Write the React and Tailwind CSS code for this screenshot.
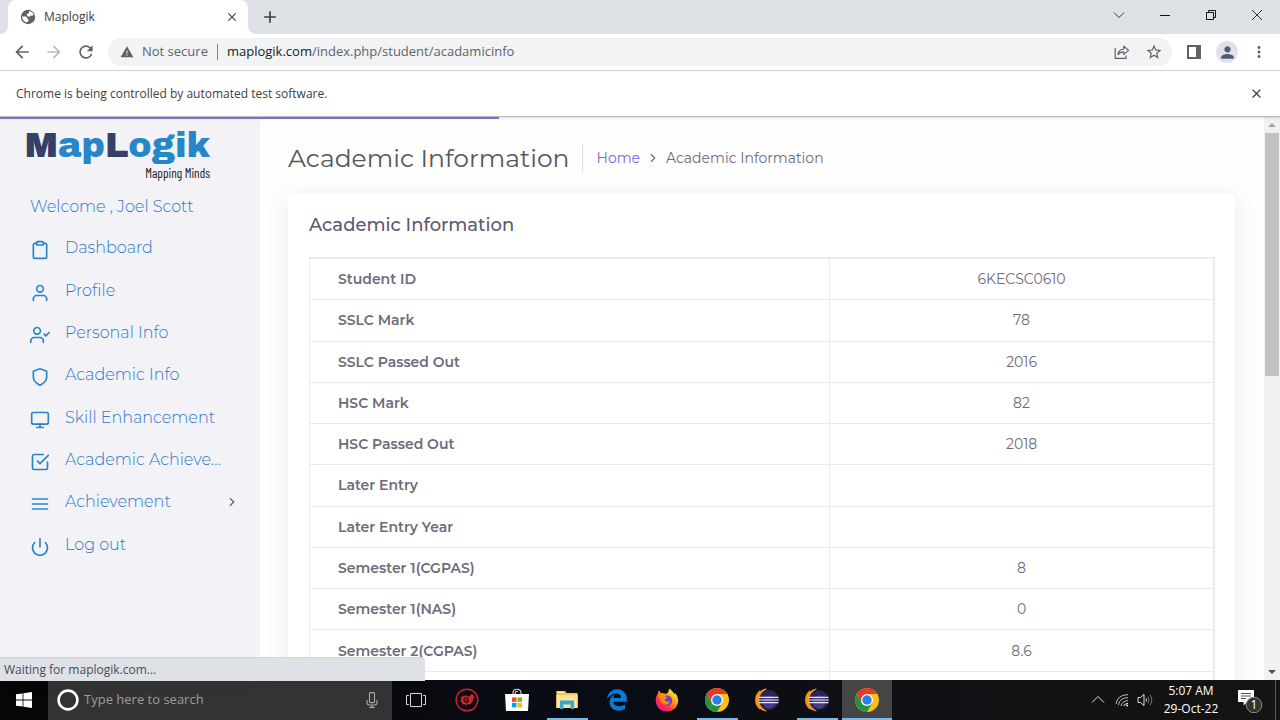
import React from "react";
import {
  FiClipboard,
  FiUser,
  FiUserCheck,
  FiShield,
  FiMonitor,
  FiCheckSquare,
  FiMenu,
  FiPower,
  FiChevronRight,
} from "react-icons/fi";
import {
  MdArrowBack,
  MdArrowForward,
  MdRefresh,
  MdWarning,
  MdStarBorder,
  MdMoreVert,
  MdPerson,
  MdClose,
  MdAdd,
} from "react-icons/md";
import { FaEdgeLegacy } from "react-icons/fa";

const navItems = [
  { label: "Dashboard", Icon: FiClipboard },
  { label: "Profile", Icon: FiUser },
  { label: "Personal Info", Icon: FiUserCheck },
  { label: "Academic Info", Icon: FiShield },
  { label: "Skill Enhancement", Icon: FiMonitor },
  { label: "Academic Achieve...", Icon: FiCheckSquare },
  { label: "Achievement", Icon: FiMenu, expandable: true },
  { label: "Log out", Icon: FiPower },
];

const records = [
  ["Student ID", "6KECSC0610"],
  ["SSLC Mark", "78"],
  ["SSLC Passed Out", "2016"],
  ["HSC Mark", "82"],
  ["HSC Passed Out", "2018"],
  ["Later Entry", ""],
  ["Later Entry Year", ""],
  ["Semester 1(CGPAS)", "8"],
  ["Semester 1(NAS)", "0"],
  ["Semester 2(CGPAS)", "8.6"],
];

function Globe() {
  return (
    <svg viewBox="0 0 16 16" className="size-4 shrink-0" aria-hidden="true">
      <circle cx="8" cy="8" r="7.2" fill="#5f6368" />
      <path
        d="M2.2 7.4 L6 7.6 7.6 9 7.4 10.2 8.8 10.8 8 12.4 6.6 13.6 Q3 12.4 2.2 9Z M9 2 Q12.6 2.6 13.6 5.8 L12.4 6.8 10 6.8 9.4 8 7.6 7 6.6 5.6 7.6 4.6 9 4.4Z"
        fill="#fff"
      />
    </svg>
  );
}

function TabStrip() {
  return (
    <header className="flex h-[34px] shrink-0 items-stretch bg-[#dee1e6]">
      <div className="flex w-2 bg-white">
        <span className="flex-1 rounded-br-lg bg-[#dee1e6]" />
      </div>
      <div className="flex w-60 items-center rounded-t-lg bg-white pr-2 pl-3">
        <Globe />
        <span className="ml-2 flex-1 text-xs text-[#3c4043]">Maplogik</span>
        <button aria-label="Close tab" className="grid size-4 place-items-center text-[#3c4043]">
          <MdClose size={14} />
        </button>
      </div>
      <div className="flex w-2 bg-white">
        <span className="flex-1 rounded-bl-lg bg-[#dee1e6]" />
      </div>
      <button aria-label="New tab" className="ml-1 grid w-5 place-items-center text-[#3c4043]">
        <MdAdd size={20} />
      </button>
      <div className="ml-auto flex text-[#333]">
        <button aria-label="Search tabs" className="grid w-[46px] place-items-center pb-1">
          <svg viewBox="0 0 12 12" className="size-3" fill="none" stroke="currentColor">
            <path d="M1 3.5 L6 8.5 11 3.5" />
          </svg>
        </button>
        <button aria-label="Minimize" className="grid w-[46px] place-items-center pb-1">
          <svg viewBox="0 0 12 12" className="size-3" fill="none" stroke="#111">
            <path d="M1 6.5 H11" />
          </svg>
        </button>
        <button aria-label="Restore" className="grid w-[46px] place-items-center pb-1">
          <svg viewBox="0 0 12 12" className="size-3" fill="none" stroke="#111">
            <path d="M1.5 3.5 H8.5 V10.5 H1.5Z M3.5 3.5 V1.5 H10.5 V8.5 H8.5" />
          </svg>
        </button>
        <button aria-label="Close" className="grid w-[46px] place-items-center pb-1">
          <svg viewBox="0 0 12 12" className="size-3" fill="none" stroke="currentColor">
            <path d="M1 1 L11 11 M11 1 L1 11" />
          </svg>
        </button>
      </div>
    </header>
  );
}

function Toolbar() {
  return (
    <div className="flex h-[37px] shrink-0 items-center border-b border-[#d5d6d8] bg-white pr-3 pl-3 text-[#5f6368]">
      <button aria-label="Back" className="grid size-5 place-items-center text-[#5f6368]">
        <MdArrowBack size={20} />
      </button>
      <button aria-label="Forward" className="ml-3 grid size-5 place-items-center text-[#babcbe]">
        <MdArrowForward size={20} />
      </button>
      <button aria-label="Reload" className="ml-3 grid size-5 place-items-center text-[#5f6368]">
        <MdRefresh size={20} />
      </button>
      <div className="ml-3 flex h-7 flex-1 items-center rounded-full bg-[#f1f3f4] pr-2 pl-3">
        <MdWarning size={14} />
        <span className="ml-2 text-[13px]">Not secure</span>
        <span className="mx-[9px] h-4 w-px bg-[#80868b]" />
        <span className="flex-1 text-[13px]">
          <span className="text-[#202124]">maplogik.com</span>/index.php/student/acadamicinfo
        </span>
        <button aria-label="Share" className="grid size-5 place-items-center">
          <svg viewBox="0 0 16 16" className="size-4" fill="none" stroke="currentColor" strokeWidth="1.2">
            <path d="M1.2 4 V14.4 H12 V11.5" />
            <path d="M4 10.6 Q4.6 5.4 9.8 5 V2.2 L14.6 6.4 9.8 10.4 V7.8 Q6 7.8 4 10.6Z" strokeLinejoin="round" />
          </svg>
        </button>
        <button aria-label="Bookmark" className="ml-3 grid size-5 place-items-center">
          <MdStarBorder size={18} />
        </button>
      </div>
      <button aria-label="Side panel" className="ml-3 grid size-5 place-items-center">
        <svg viewBox="0 0 14 14" className="size-[14px]">
          <path d="M0 0 H14 V14 H0Z M2 2 V12 H9 V2Z" fill="#5f6368" fillRule="evenodd" />
        </svg>
      </button>
      <button
        aria-label="Account"
        className="ml-3 grid size-[22px] place-items-center rounded-full bg-[#dfe2e8] text-[#4d5b76]"
      >
        <MdPerson size={19} />
      </button>
      <button aria-label="More" className="ml-3 grid w-[18px] place-items-center">
        <MdMoreVert size={18} />
      </button>
    </div>
  );
}

function Sidebar() {
  return (
    <aside className="w-65 shrink-0 bg-[#f2f2f7] font-['Montserrat','Inter',sans-serif] text-base font-light text-[#2f78c4] shadow-[0_0_15px_0_rgba(34,41,47,0.06)]">
      <div className="flex w-[210px] flex-col items-end pt-2">
        <div className="font-['Arial_Black','Archivo_Black','Inter',sans-serif] text-[35px] leading-10 font-normal text-[#2786c8]">
          <span className="text-[#354069]">M</span>ap<span className="text-[#354069]">L</span>ogik
        </div>
        <div className="font-['Bahnschrift_Condensed','Barlow_Condensed','Roboto_Condensed',sans-serif] text-[13px] leading-4 font-normal text-[#1a1a1a]">
          Mapping Minds
        </div>
      </div>
      <p className="mt-3.5 pl-[30px] leading-6">Welcome , Joel Scott</p>
      <nav className="mt-2">
        <ul className="grid h-[339px] grid-rows-8">
          {navItems.map(({ label, Icon, expandable }) => (
            <li key={label} className="flex">
              <a href="#" className="flex flex-1 items-center pr-[21px] pl-[30px]">
                <Icon size={20} className="mt-1 shrink-0 text-[#2786c8]" />
                <span className="ml-[15px] flex-1 whitespace-nowrap">{label}</span>
                {expandable && <FiChevronRight size={14} className="text-[#625f6e]" />}
              </a>
            </li>
          ))}
        </ul>
      </nav>
    </aside>
  );
}

function Main() {
  return (
    <main className="min-w-0 flex-1 overflow-hidden bg-[#fefefe] pt-[27px] pr-[29px] pl-7 font-['Montserrat','Inter',sans-serif] text-[#6e6b7b]">
      <div className="flex h-7 items-center">
        <h2 className="border-r border-[#d6dce1] pr-3 text-[25px] leading-7 text-[#585858]">
          Academic Information
        </h2>
        <nav aria-label="Breadcrumb" className="flex items-center gap-1.5 pl-3.5 text-sm">
          <a href="#" className="text-[#7367f0]">
            Home
          </a>
          <FiChevronRight size={14} />
          <span>Academic Information</span>
        </nav>
      </div>
      <section className="mt-[22px] rounded-md bg-white pt-[17px] pr-5 pl-[21px] shadow-[0_4px_24px_0_rgba(34,41,47,0.1)]">
        <h4 className="text-lg leading-7 font-medium text-[#5e5873]">Academic Information</h4>
        <table className="mt-[18px] block w-full border-t-2 border-r-2 border-l border-[#ebe9f1] text-sm">
          <tbody className="grid h-[454px] auto-rows-fr">
            {records.map(([name, value]) => (
              <tr key={name} className="grid grid-cols-[57.6%_1fr] border-b border-[#ebe9f1]">
                <th scope="row" className="flex items-center border-r border-[#ebe9f1] pl-7 text-left font-semibold">
                  {name}
                </th>
                <td className="flex items-center justify-center">{value}</td>
              </tr>
            ))}
            <tr className="grid grid-cols-[57.6%_1fr]">
              <td className="border-r border-[#ebe9f1]" />
              <td />
            </tr>
          </tbody>
        </table>
      </section>
    </main>
  );
}

function Scrollbar() {
  return (
    <div className="flex w-4 shrink-0 flex-col items-center justify-between bg-[#f1f1f1]">
      <div className="flex flex-col items-center">
        <svg viewBox="0 0 16 16" className="size-4">
          <path d="M4 10 L8 6 12 10Z" fill="#a3a3a3" />
        </svg>
        <div className="h-[243px] w-3.5 bg-[#c1c1c1]" />
      </div>
      <svg viewBox="0 0 16 16" className="size-4">
        <path d="M4 6 L8 10 12 6Z" fill="#505050" />
      </svg>
    </div>
  );
}

function ChromeLogo() {
  return (
    <svg viewBox="0 0 24 24" className="size-6" aria-hidden="true">
      <circle cx="12" cy="12" r="12" fill="#fbc116" />
      <path d="M12 0 A12 12 0 0 0 1.6 6 L6.8 15 12 6 H22.4 A12 12 0 0 0 12 0Z" fill="#e33b2e" />
      <path d="M1.6 6 A12 12 0 0 0 12 24 L17.2 15 H6.8Z" fill="#229342" />
      <circle cx="12" cy="12" r="6" fill="#fff" />
      <circle cx="12" cy="12" r="4.7" fill="#2f7de9" />
    </svg>
  );
}

function EclipseLogo() {
  return (
    <svg viewBox="0 0 24 24" className="size-6" aria-hidden="true">
      <path d="M11.4 .4 A11.7 11.7 0 0 0 11.4 23.6 L11.4 22.4 A11.5 11.5 0 0 1 11.4 1.6Z" fill="#f7941e" />
      <path d="M5 3 A11.6 11.6 0 0 0 5 21 A13 13 0 0 1 5 3Z" fill="#f7941e" stroke="#f7941e" strokeWidth="1.2" />
      <circle cx="14" cy="12" r="10" fill="#2c2255" />
      <circle cx="14" cy="14" r="6.5" fill="#483a86" />
      <path d="M3.6 9.4 H23.4 M3.3 12 H23.8 M3.6 14.6 H23.4" stroke="#e9e6f4" strokeWidth="1.2" />
    </svg>
  );
}

function FirefoxLogo() {
  return (
    <svg viewBox="0 0 24 24" className="size-6" aria-hidden="true">
      <defs>
        <linearGradient id="fox" x1="0.85" y1="0.1" x2="0.2" y2="0.95">
          <stop offset="0" stopColor="#fff044" />
          <stop offset="0.4" stopColor="#ff980e" />
          <stop offset="0.7" stopColor="#ff3647" />
          <stop offset="1" stopColor="#e31587" />
        </linearGradient>
      </defs>
      <path
        d="M14.4 .4 Q18 3.2 19.6 6.2 L20 4.8 Q24.4 9.6 22.8 15.2 Q20.4 23.4 12 23.6 Q2.6 23.2 .8 14.4 Q.2 9 3 5.2 L3.4 2.6 Q5 3.4 5.8 5 Q8 4.8 9.4 5.4 Q11.8 6 12.6 5 Q13.8 3.2 14.4 .4Z"
        fill="url(#fox)"
      />
      <path d="M7.2 11.6 Q8.4 7.4 13 7.6 Q17.6 9 17.2 13.4 Q16 17.8 11.6 17.4 Q7.8 16.4 7.2 11.6Z" fill="#6b42c9" />
      <path d="M3.6 7.2 Q7.6 6.4 10 8.4 L12.4 9 Q11.8 10.6 9.8 11 Q9.4 13 12 13.6 Q14 14 15 13 Q14.2 17 9.8 16.6 Q5.4 15 3.6 7.2Z" fill="#ff8a16" />
    </svg>
  );
}

function StoreLogo() {
  return (
    <svg viewBox="0 0 24 24" className="size-6" aria-hidden="true">
      <path d="M8 7 V4.4 Q8.4 1.2 12 1.2 Q15.6 1.2 16 4.4 V7 M10.2 7 V5 Q10.4 3.2 13 3.2" fill="none" stroke="#ddd" strokeWidth="1.1" />
      <path d="M0 6 H24 L23 23 H1Z" fill="#fff" />
      <path d="M7 9.4 H11.5 V13.9 H7Z" fill="#f25022" />
      <path d="M12.5 9.4 H17 V13.9 H12.5Z" fill="#7fba00" />
      <path d="M7 14.9 H11.5 V19.4 H7Z" fill="#00a4ef" />
      <path d="M12.5 14.9 H17 V19.4 H12.5Z" fill="#ffb900" />
    </svg>
  );
}

function FolderLogo() {
  return (
    <svg viewBox="0 0 24 24" className="size-6" aria-hidden="true">
      <path d="M1.4 3 H10 L11.4 5 H22.6 V20 H1.4Z" fill="#f3c74f" />
      <path d="M1.4 7 H22.6 V20 H1.4Z" fill="#fde495" />
      <path d="M2 4.2 H9" stroke="#fff3c0" />
      <path d="M5 21 V12.6 H19 V21 H15.6 V16.6 H8.4 V21Z" fill="#37a6dd" />
    </svg>
  );
}

function BugLogo() {
  return (
    <svg viewBox="0 0 24 24" className="size-6" aria-hidden="true">
      <circle cx="12" cy="12" r="10.8" fill="none" stroke="#d02328" strokeWidth="1.4" />
      <path
        d="M5 8 L7 9.4 7.8 7.4 9.6 8.2 11 7 12.6 8.2 14.4 8.4 17 5.6 20 10 18.2 10 Q18.4 14.6 14.4 16.6 L12.6 16 11 17.4 9.4 16 7.2 16.4 7 14.4 5 13.4 6.4 11.6Z"
        fill="#d02328"
      />
      <path d="M13.2 10.2 Q9 9.4 9 12.2 Q9.6 14.8 13 13.8 V12.2 H11.4" stroke="#140a10" strokeWidth="1.2" fill="none" />
    </svg>
  );
}

const apps = [
  { name: "Debugger", Logo: BugLogo },
  { name: "Store", Logo: StoreLogo },
  { name: "File Explorer", Logo: FolderLogo, open: true },
  { name: "Edge", Logo: () => <FaEdgeLegacy size={22} color="#0a7ad8" /> },
  { name: "Firefox", Logo: FirefoxLogo },
  { name: "Chrome", Logo: ChromeLogo, open: true },
  { name: "Eclipse", Logo: EclipseLogo },
  { name: "Eclipse workspace", Logo: EclipseLogo, open: true },
  { name: "Chrome window", Logo: ChromeLogo, open: true, active: true },
];

function Taskbar() {
  return (
    <footer className="flex h-10 shrink-0 items-stretch bg-linear-to-r from-[#060606] via-[#090c14] via-45% to-[#151413] text-white">
      <button aria-label="Start" className="grid w-12 place-items-center">
        <svg viewBox="0 0 16 16" className="size-4" fill="#fff">
          <path d="M0 2.3 L6.6 1.4 V7.6 H0Z M7.4 1.2 L16 0 V7.6 H7.4Z M0 8.4 H6.6 V14.6 L0 13.7Z M7.4 8.4 H16 V16 L7.4 14.8Z" />
        </svg>
      </button>
      <label className="flex w-[344px] items-center bg-[#333] pr-3 pl-2">
        <svg viewBox="0 0 24 24" className="size-6 shrink-0">
          <circle cx="12" cy="12" r="9.4" fill="none" stroke="#fff" strokeWidth="2.6" />
        </svg>
        <input
          type="text"
          aria-label="Search"
          placeholder="Type here to search"
          className="ml-1 min-w-0 flex-1 bg-transparent text-[13px] outline-none placeholder:text-[#9b9b9b]"
        />
        <svg viewBox="0 0 16 16" className="size-4 shrink-0" fill="none" stroke="#a8a8a8" strokeWidth="1.1">
          <rect x="5.5" y=".6" width="5" height="10" rx="1" />
          <path d="M3 8 V10.6 Q3 13 5.4 13 H10.6 Q13 13 13 10.6 V8 M8 13 V15.4 M5.4 15.4 H10.6" />
        </svg>
      </label>
      <button aria-label="Task view" className="grid w-12 place-items-center">
        <svg viewBox="0 0 20 14" className="h-3.5 w-5" fill="none" stroke="#d8d8d8">
          <path d="M4.5 .5 H15.5 V13.5 H4.5Z M2.8 2.5 H.5 V11.5 H2.8 M17.2 2.5 H19.5 V11.5 H17.2" />
        </svg>
      </button>
      <div className="ml-0.5 flex">
        {apps.map(({ name, Logo, open, active }) => (
          <button
            key={name}
            aria-label={name}
            className={`flex w-[50px] flex-col items-center justify-between ${active ? "bg-[#454545]" : ""}`}
          >
            <span className="grid h-[38px] place-items-center pt-0.5">
              <Logo />
            </span>
            <span className={`h-0.5 ${active ? "w-full" : "w-[41px]"} ${open ? "bg-[#76b9ed]" : ""}`} />
          </button>
        ))}
      </div>
      <div className="ml-auto flex items-center pr-1">
        <svg viewBox="0 0 14 14" className="size-3.5" fill="none" stroke="#ddd">
          <path d="M1 9.5 L7 3.5 13 9.5" />
        </svg>
        <svg viewBox="0 0 14 14" className="ml-2.5 size-3.5" fill="none" stroke="#bbb">
          <path d="M1 11 Q2 2 13 1.6 M3.4 12 Q4.4 5 13 4.6 M6 13 Q7 8 13 7.6" />
          <path d="M8.6 13 Q9 10.8 13 10.4" stroke="#eee" />
          <circle cx="12" cy="12.6" r="1" fill="#eee" stroke="none" />
        </svg>
        <svg viewBox="0 0 16 14" className="ml-2 h-3.5 w-4" fill="none" stroke="#ddd">
          <path d="M1 4.5 H3.6 L7 1.2 V12.8 L3.6 9.5 H1Z" />
          <path d="M9 5.4 Q10 7 9 8.6" />
          <path d="M11 3.6 Q13 7 11 10.4 M13.2 2 Q16.4 7 13.2 12" stroke="#777" />
        </svg>
        <div className="ml-2 w-[60px] text-center text-xs leading-[18px] whitespace-nowrap">
          <div>5:07 AM</div>
          <div>29-Oct-22</div>
        </div>
        <button aria-label="Notifications" className="ml-4 grid place-items-center">
          <svg viewBox="0 0 26 26" className="size-[26px]">
            <path d="M1 3 H17 V15 H10 L6.6 18.4 V15 H1Z" fill="#fff" />
            <path d="M4 6.5 H14 M4 9 H14 M4 11.5 H9" stroke="#555" />
            <circle cx="17" cy="18" r="7.8" fill="#333" stroke="#8a8a8a" />
            <text x="17" y="22.4" textAnchor="middle" fontSize="12" fill="#fff" fontFamily="Open Sans, sans-serif">
              1
            </text>
          </svg>
        </button>
        <span className="ml-3 h-10 w-px bg-[#555]" />
      </div>
    </footer>
  );
}

export default function App() {
  return (
    <div className="flex h-screen flex-col overflow-hidden bg-white font-['Segoe_UI','Open_Sans','Noto_Sans',sans-serif]">
      <TabStrip />
      <Toolbar />
      <div className="z-10 flex h-[46px] shrink-0 items-center justify-between border-b border-[#b9babc] bg-white pr-4 pl-4 text-xs text-[#3c4043] shadow-sm">
        <span>Chrome is being controlled by automated test software.</span>
        <button aria-label="Dismiss" className="grid size-4 place-items-center">
          <MdClose size={15} />
        </button>
      </div>
      <div className="relative flex min-h-0 flex-1">
        <Sidebar />
        <Main />
        <Scrollbar />
        <div className="absolute top-0 left-0 z-20 h-0.5 w-[39%] bg-[#7a71d4]" />
        <div className="absolute -bottom-px left-0 z-20 flex h-6 w-[425px] items-center rounded-tr-sm border-t border-[#d0d2d6] bg-[#dee1e6] pl-1 text-xs text-[#4a4d51]">
          Waiting for maplogik.com...
        </div>
      </div>
      <Taskbar />
    </div>
  );
}
